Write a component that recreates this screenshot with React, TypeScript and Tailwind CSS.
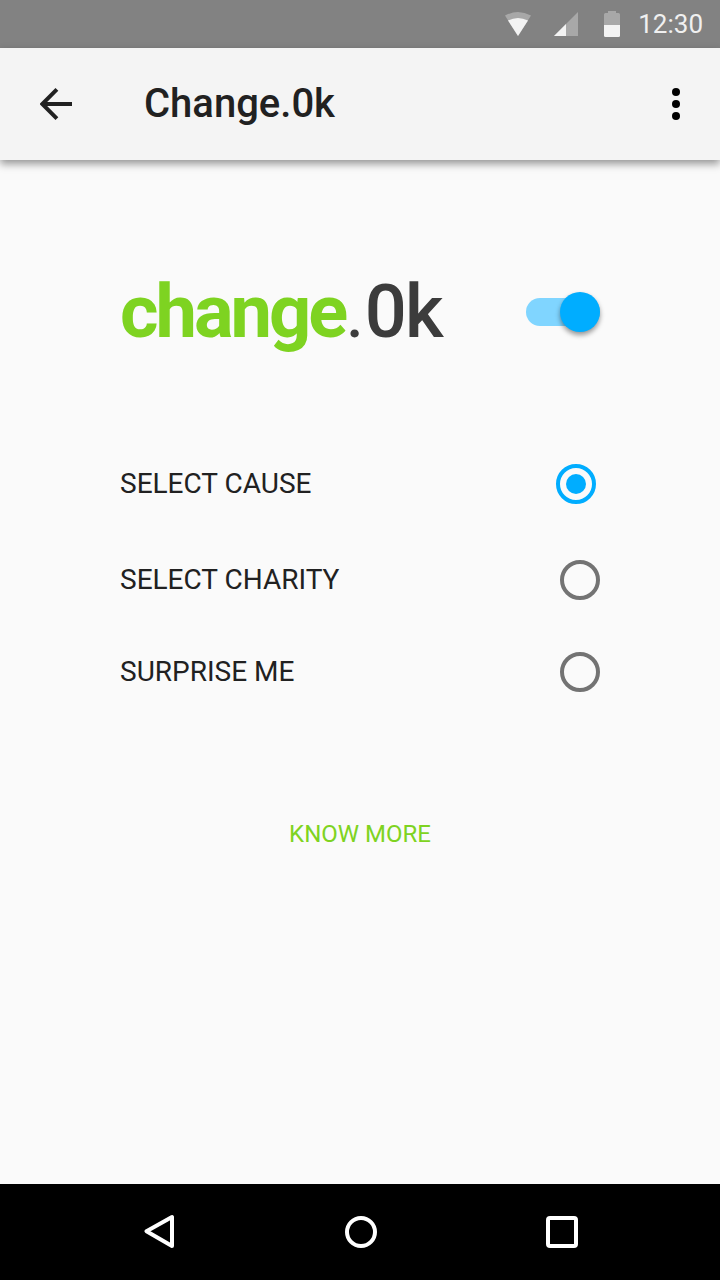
import clsx from "clsx";

const options = [
  { label: "SELECT CAUSE", selected: true, row: "h-10" },
  { label: "SELECT CHARITY", selected: false, row: "mt-14 h-10" },
  { label: "SURPRISE ME", selected: false, row: "mt-13 h-10" },
];

// ── Status bar ───────────────────────────────────────────────────────

function StatusBar() {
  return (
    <div className="flex h-12 shrink-0 items-center justify-end bg-[#828282] pr-[17px]">
      <svg className="mr-[22px] h-6 w-7" viewBox="0 0 28 24" aria-hidden="true">
        <path d="M1 3.6Q14 -3.6 27 3.6L14 24Z" fill="#a8a8a8" />
        <path d="M4 8.5Q14 3.5 24 8.5L14 24Z" fill="#f3f3f3" />
      </svg>
      <svg className="mr-[26px] h-6 w-6" viewBox="0 0 24 24" aria-hidden="true">
        <path d="M24 0V24H0Z" fill="#a8a8a8" />
        <path d="M12 12V24H0Z" fill="#f3f3f3" />
      </svg>
      <svg className="mr-[18px] h-[26px] w-4" viewBox="0 0 16 26" aria-hidden="true">
        <path d="M4 0H12V2H14.5Q16 2 16 3.5V14H0V3.5Q0 2 1.5 2H4Z" fill="#a8a8a8" />
        <path d="M0 14H16V24.5Q16 26 14.5 26H1.5Q0 26 0 24.5Z" fill="#f3f3f3" />
      </svg>
      <span className="text-[26px] leading-none text-[#f0f0f0]">12:30</span>
    </div>
  );
}

// ── App bar ──────────────────────────────────────────────────────────

function AppBar() {
  return (
    <header className="relative flex h-28 shrink-0 items-center bg-[#f4f4f4] pl-10 pr-10 shadow-[0_4px_8px_rgba(0,0,0,0.4)]">
      <button type="button" aria-label="Back">
        <svg className="h-8 w-8" viewBox="0 0 32 32" fill="none" stroke="#212121" strokeWidth="4">
          <path d="M16.9 1.4L2.3 16L16.9 30.6M2.3 16H32" />
        </svg>
      </button>
      <h1 className="ml-18 flex-1 text-[40px] font-medium leading-none text-[#212121]">Change.0k</h1>
      <button type="button" aria-label="More options" className="flex flex-col gap-1">
        <span className="size-2 rounded-full bg-black" />
        <span className="size-2 rounded-full bg-black" />
        <span className="size-2 rounded-full bg-black" />
      </button>
    </header>
  );
}

// ── Controls ─────────────────────────────────────────────────────────

function Toggle() {
  return (
    <button
      type="button"
      role="switch"
      aria-checked="true"
      aria-label="change.0k"
      className="flex h-7 w-[74px] items-center justify-end rounded-full bg-[#80d5ff]"
    >
      <span className="size-10 rounded-full bg-[#00adff] shadow-[0_3px_5px_rgba(0,0,0,0.4)]" />
    </button>
  );
}

function Radio({ selected }: { selected: boolean }) {
  return (
    <span
      className={clsx(
        "flex size-10 items-center justify-center rounded-full border-4",
        selected ? "mr-1 border-[#00adff]" : "border-[#737373]",
      )}
    >
      {selected && <span className="size-5 rounded-full bg-[#00adff]" />}
    </span>
  );
}

function NavBar() {
  return (
    <nav className="flex h-24 shrink-0 items-center justify-between bg-black pl-36 pr-[142px]">
      <svg className="h-9 w-8" viewBox="0 0 32 36" fill="none" stroke="#fff" strokeWidth="4" strokeLinejoin="round">
        <path d="M28 3V32L2.5 17.2Z" />
      </svg>
      <span className="size-8 rounded-full border-4 border-white" />
      <span className="size-8 rounded-[4px] border-4 border-white" />
    </nav>
  );
}

export default function App() {
  return (
    <div className="flex h-screen w-full flex-col overflow-hidden bg-[#fafafa] font-['Roboto',sans-serif]">
      <StatusBar />
      <AppBar />

      <main className="flex flex-1 flex-col px-30">
        <div className="mt-28 flex h-20 items-center justify-between">
          <h2 className="flex items-baseline text-[74px] leading-none">
            <span className="font-bold tracking-[-3px] text-[#7ed321]">change</span>
            <span className="text-[#3c3c3c]">.</span>
            <span className="font-medium tracking-[-2px] text-[#3c3c3c]">0k</span>
          </h2>
          <Toggle />
        </div>

        <div className="mt-28">
          {options.map((option) => (
            <div key={option.label} className={clsx("flex items-center justify-between", option.row)}>
              <span className="text-[28px] leading-none text-[#212121]">{option.label}</span>
              <Radio selected={option.selected} />
            </div>
          ))}
        </div>

        <a href="#" className="mt-[130px] self-center text-2xl leading-6 text-[#7ed321]">
          KNOW MORE
        </a>
      </main>

      <NavBar />
    </div>
  );
}
